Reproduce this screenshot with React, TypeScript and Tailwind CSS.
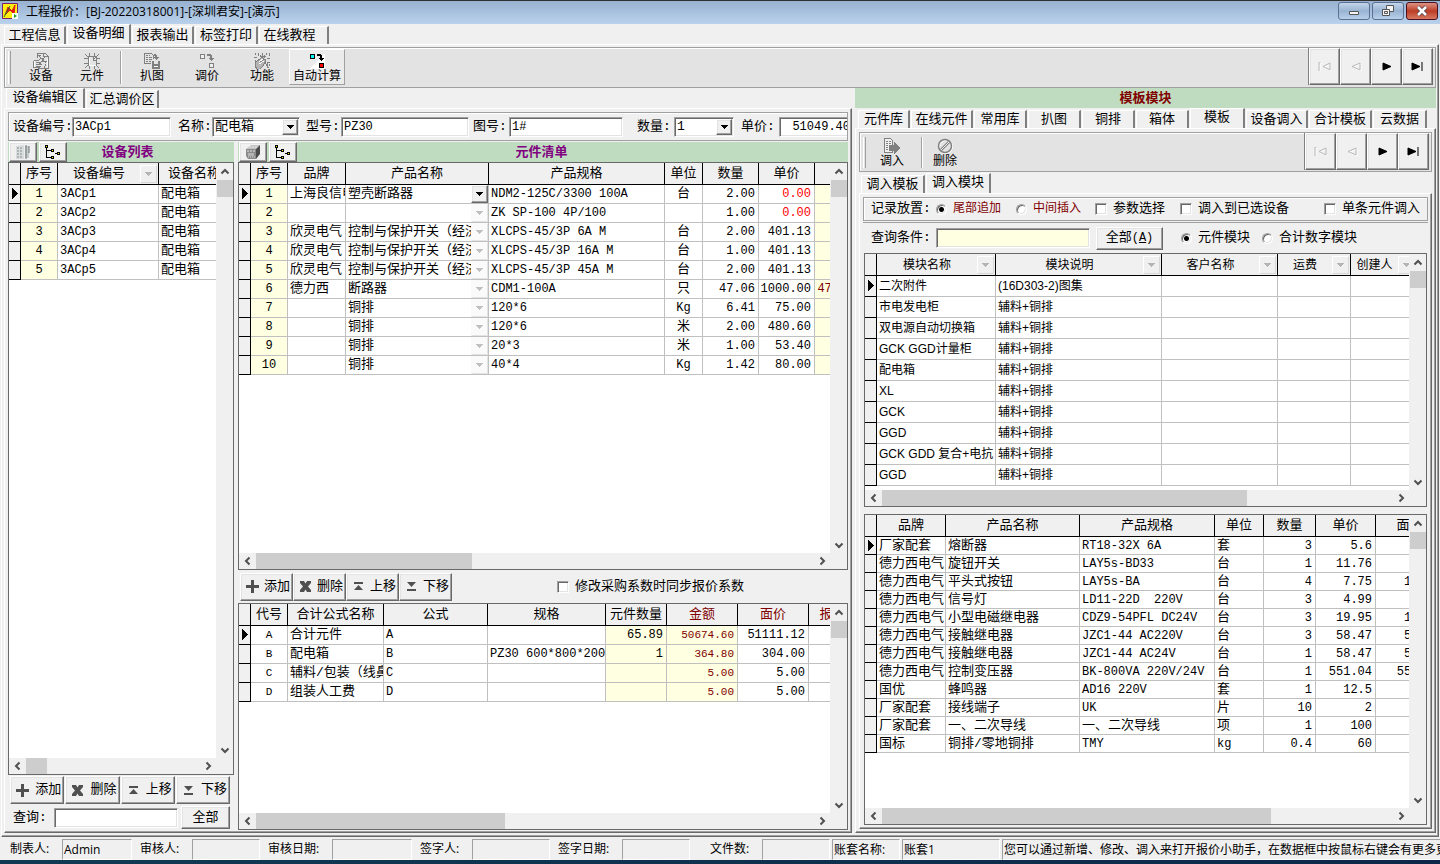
import type { ReactNode } from 'react';
import clsx from 'clsx';

// classic Windows bevels
const RAISED = 'border border-t-white border-l-white border-r-[#696969] border-b-[#696969] bg-[#f0f0f0] shadow-[inset_-1px_-1px_0_#a0a0a0,inset_1px_1px_0_#e3e3e3]';
const SUNKEN = 'border border-t-[#a0a0a0] border-l-[#a0a0a0] border-r-white border-b-white shadow-[inset_1px_1px_0_#696969,inset_-1px_-1px_0_#e3e3e3]';
const ETCHED = 'border border-[#a0a0a0] shadow-[inset_1px_1px_0_#fff]';
const FRAME = 'border border-t-white border-l-white border-r-[#696969] border-b-[#696969] shadow-[inset_-1px_-1px_0_#a0a0a0]';

type Column = {
  label: string;
  width: string;
  align?: 'left' | 'center' | 'right';
  color?: string;
  headColor?: string;
  bg?: string;
  filter?: boolean;
  picker?: boolean;
  small?: boolean;
};

const ALIGN = { left: 'text-left', center: 'text-center', right: 'text-right' };

const DEVICE_COLUMNS: Column[] = [
  { label: '序号', width: 'w-[37px]', align: 'center', bg: 'bg-[#ffffe1]' },
  { label: '设备编号', width: 'w-[101px]', filter: true },
  { label: '设备名称', width: 'w-[71px]' },
];

const DEVICE_ROWS = [
  ['1', '3ACp1', '配电箱'],
  ['2', '3ACp2', '配电箱'],
  ['3', '3ACp3', '配电箱'],
  ['4', '3ACp4', '配电箱'],
  ['5', '3ACp5', '配电箱'],
];

const PART_COLUMNS: Column[] = [
  { label: '序号', width: 'w-[37px]', align: 'center', bg: 'bg-[#ffffe1]' },
  { label: '品牌', width: 'w-[58px]' },
  { label: '产品名称', width: 'w-[143px]', picker: true },
  { label: '产品规格', width: 'w-[176px]' },
  { label: '单位', width: 'w-[38px]', align: 'center' },
  { label: '数量', width: 'w-[56px]', align: 'right' },
  { label: '单价', width: 'w-[56px]', align: 'right' },
  { label: '金额', width: 'w-[64px]', align: 'right', bg: 'bg-[#ffffe1]', color: 'text-[#800000]' },
];

const PART_ROWS = [
  ['1', '上海良信电器', '塑壳断路器', 'NDM2-125C/3300 100A', '台', '2.00', '0.00', ''],
  ['2', '', '', 'ZK SP-100 4P/100', '', '1.00', '0.00', ''],
  ['3', '欣灵电气', '控制与保护开关（经济型）', 'XLCPS-45/3P 6A M', '台', '2.00', '401.13', ''],
  ['4', '欣灵电气', '控制与保护开关（经济型）', 'XLCPS-45/3P 16A M', '台', '1.00', '401.13', ''],
  ['5', '欣灵电气', '控制与保护开关（经济型）', 'XLCPS-45/3P 45A M', '台', '2.00', '401.13', ''],
  ['6', '德力西', '断路器', 'CDM1-100A', '只', '47.06', '1000.00', '47060.00'],
  ['7', '', '铜排', '120*6', 'Kg', '6.41', '75.00', ''],
  ['8', '', '铜排', '120*6', '米', '2.00', '480.60', ''],
  ['9', '', '铜排', '20*3', '米', '1.00', '53.40', ''],
  ['10', '', '铜排', '40*4', 'Kg', '1.42', '80.00', ''],
];

const FORMULA_COLUMNS: Column[] = [
  { label: '代号', width: 'w-[37px]', align: 'center', small: true },
  { label: '合计公式名称', width: 'w-[96px]' },
  { label: '公式', width: 'w-[104px]' },
  { label: '规格', width: 'w-[118px]' },
  { label: '元件数量', width: 'w-[61px]', align: 'right', bg: 'bg-[#ffffe1]' },
  { label: '金额', width: 'w-[71px]', align: 'right', bg: 'bg-[#ffffe1]', color: 'text-[#800000]', headColor: 'text-[#800000]', small: true },
  { label: '面价', width: 'w-[71px]', align: 'right', headColor: 'text-[#800000]' },
  { label: '报价系数', width: 'w-[74px]', align: 'right', headColor: 'text-[#800000]' },
];

const FORMULA_ROWS = [
  ['A', '合计元件', 'A', '', '65.89', '50674.60', '51111.12', ''],
  ['B', '配电箱', 'B', 'PZ30 600*800*200', '1', '364.80', '304.00', ''],
  ['C', '辅料/包装（线鼻子）', 'C', '', '', '5.00', '5.00', ''],
  ['D', '组装人工费', 'D', '', '', '5.00', '5.00', ''],
];

const MODULE_COLUMNS: Column[] = [
  { label: '模块名称', width: 'w-[119px]', filter: true },
  { label: '模块说明', width: 'w-[166px]', filter: true },
  { label: '客户名称', width: 'w-[116px]', filter: true },
  { label: '运费', width: 'w-[73px]', filter: true },
  { label: '创建人', width: 'w-[66px]', filter: true },
];

const MODULE_ROWS = [
  ['二次附件', '(16D303-2)图集', '', '', ''],
  ['市电发电柜', '辅料+铜排', '', '', ''],
  ['双电源自动切换箱', '辅料+铜排', '', '', ''],
  ['GCK GGD计量柜', '辅料+铜排', '', '', ''],
  ['配电箱', '辅料+铜排', '', '', ''],
  ['XL', '辅料+铜排', '', '', ''],
  ['GCK', '辅料+铜排', '', '', ''],
  ['GGD', '辅料+铜排', '', '', ''],
  ['GCK GDD 复合+电抗', '辅料+铜排', '', '', ''],
  ['GGD', '辅料+铜排', '', '', ''],
];

const ITEM_COLUMNS: Column[] = [
  { label: '品牌', width: 'w-[69px]' },
  { label: '产品名称', width: 'w-[134px]' },
  { label: '产品规格', width: 'w-[135px]' },
  { label: '单位', width: 'w-[49px]' },
  { label: '数量', width: 'w-[52px]', align: 'right' },
  { label: '单价', width: 'w-[60px]', align: 'right' },
  { label: '面价', width: 'w-[68px]', align: 'right' },
];

const ITEM_ROWS = [
  ['厂家配套', '熔断器', 'RT18-32X 6A', '套', '3', '5.6', ''],
  ['德力西电气', '旋钮开关', 'LAY5s-BD33', '台', '1', '11.76', ''],
  ['德力西电气', '平头式按钮', 'LAY5s-BA', '台', '4', '7.75', '14.09'],
  ['德力西电气', '信号灯', 'LD11-22D  220V', '台', '3', '4.99', ''],
  ['德力西电气', '小型电磁继电器', 'CDZ9-54PFL DC24V', '台', '3', '19.95', '19.95'],
  ['德力西电气', '接触继电器', 'JZC1-44 AC220V', '台', '3', '58.47', '58.47'],
  ['德力西电气', '接触继电器', 'JZC1-44 AC24V', '台', '1', '58.47', '58.47'],
  ['德力西电气', '控制变压器', 'BK-800VA 220V/24V', '台', '1', '551.04', '551.04'],
  ['国优', '蜂鸣器', 'AD16 220V', '套', '1', '12.5', ''],
  ['厂家配套', '接线端子', 'UK', '片', '10', '2', ''],
  ['厂家配套', '一、二次导线', '一、二次导线', '项', '1', '100', ''],
  ['国标', '铜排/零地铜排', 'TMY', 'kg', '0.4', '60', ''],
];

function Chevron({ dir }: { dir: 'up' | 'down' | 'left' | 'right' }) {
  const paths = {
    up: 'M1.5 6.5 5 3l3.5 3.5',
    down: 'M1.5 3.5 5 7l3.5-3.5',
    left: 'M6.5 1.5 3 5l3.5 3.5',
    right: 'M3.5 1.5 7 5 3.5 8.5',
  };
  return (
    <svg viewBox="0 0 10 10" className="w-2.5 h-2.5">
      <path d={paths[dir]} fill="none" stroke="#505050" strokeWidth="2" />
    </svg>
  );
}

function Triangle({ className }: { className?: string }) {
  return (
    <svg viewBox="0 0 7 4" className={clsx('w-[7px] h-1', className)} shapeRendering="crispEdges">
      <path d="M0 0h7v1H6v1H5v1H4v1H3V3H2V2H1V1H0z" fill="currentColor" />
    </svg>
  );
}

type GridProps = {
  columns: Column[];
  rows: string[][];
  label: string;
  thumb: string;
  rowClass?: string;
  sans?: boolean;
  className?: string;
};

function DataGrid({ columns, rows, label, thumb, rowClass = 'h-[19px] leading-[18px]', sans, className }: GridProps) {
  const cellSize = (text: string, small?: boolean) => {
    if (sans) return 'text-xs';
    // half-width text is set a size smaller so it keeps to the 7px pitch
    if (/[^\x00-\x7f]/.test(text)) return 'text-[13px]';
    return small ? 'text-[11px]' : 'text-xs';
  };

  return (
    <div className={clsx('flex min-h-0 flex-col border border-[#696969] bg-white', className)}>
      <div className="flex min-h-0 flex-1">
        <div className="min-w-0 flex-1 overflow-hidden">
          <table
            aria-label={label}
            className={clsx('w-0 table-fixed border-separate border-spacing-0', sans && "[font-family:'Liberation_Sans','Noto_Sans_CJK_SC',sans-serif]")}
          >
            <colgroup>
              <col className="w-3" />
              {columns.map((c, i) => <col key={i} className={c.width} />)}
            </colgroup>
            <thead>
              <tr className="h-[22px] leading-5">
                <th className="border-r border-b border-black bg-[#f0f0f0] p-0" />
                {columns.map((c, i) => (
                  <th key={i} className={clsx('overflow-hidden whitespace-nowrap border-r border-b border-black bg-[#f0f0f0] p-0 font-normal', sans ? 'text-xs' : 'text-[13px]', c.headColor)}>
                    <div className="flex items-center justify-center overflow-hidden">
                      <span className="flex-1">{c.label}</span>
                      {c.filter && (
                        <span className="mr-px flex h-[18px] w-[17px] items-center justify-center border border-t-white border-l-white border-r-[#d8d8d8] border-b-[#d8d8d8] text-[#b4b4b4]">
                          <Triangle />
                        </span>
                      )}
                    </div>
                  </th>
                ))}
              </tr>
            </thead>
            <tbody>
              {rows.map((row, r) => (
                <tr key={r} className={rowClass}>
                  <td className="border-r border-b border-black bg-[#f0f0f0] p-0">
                    {r === 0 && (
                      <svg viewBox="0 0 11 12" className="h-3 w-[11px]" shapeRendering="crispEdges">
                        <path d="M3 0h1v1h1v1h1v1h1v1h1v1h1v1H8v1H7v1H6v1H5v1H4v1H3z" />
                      </svg>
                    )}
                  </td>
                  {row.map((text, i) => {
                    const c = columns[i];
                    return (
                      <td
                        key={i}
                        className={clsx(
                          'overflow-hidden whitespace-pre border-r border-b border-[#c0c0c0] p-0',
                          ALIGN[c.align ?? 'left'],
                          c.align === 'center' ? '' : c.align === 'right' ? 'pr-[3px]' : 'pl-0.5',
                          c.bg,
                          text === '0.00' ? 'text-[#ff0000]' : c.color,
                          cellSize(text, c.small),
                        )}
                      >
                        {c.picker ? (
                          <div className="flex items-center">
                            <span className="min-w-0 flex-1 overflow-hidden">{text}</span>
                            <button
                              aria-label="选择产品"
                              className={clsx('flex h-[18px] w-[17px] shrink-0 items-center justify-center', r === 0 ? RAISED : 'border border-transparent border-r-[#e3e3e3] border-b-[#e3e3e3] bg-[#fafafa] text-[#c0c0c0]')}
                            >
                              <Triangle />
                            </button>
                          </div>
                        ) : text}
                      </td>
                    );
                  })}
                </tr>
              ))}
            </tbody>
          </table>
        </div>
        <div className="flex w-[17px] shrink-0 flex-col bg-[#f0f0f0] pl-px">
          <div className="flex h-[17px] items-center justify-center"><Chevron dir="up" /></div>
          <div className="h-[17px] bg-[#cdcdcd]" />
          <div className="flex-1" />
          <div className="flex h-[17px] items-center justify-center"><Chevron dir="down" /></div>
        </div>
      </div>
      <div className="flex h-4 shrink-0 bg-[#f0f0f0]">
        <div className="flex w-[17px] items-center justify-center"><Chevron dir="left" /></div>
        <div className={clsx('bg-[#cdcdcd]', thumb)} />
        <div className="flex-1" />
        <div className="mr-[17px] flex w-[17px] items-center justify-center"><Chevron dir="right" /></div>
      </div>
    </div>
  );
}

type TabItem = [label: string, width: string];

function TabStrip({ tabs, active, className }: { tabs: TabItem[]; active: string; className?: string }) {
  return (
    <div role="tablist" className={clsx('flex h-5 shrink-0 items-end gap-px text-[13px]', className)}>
      {tabs.map(([label, width]) => (
        <button
          key={label}
          role="tab"
          aria-selected={label === active}
          className={clsx(
            'shrink-0 whitespace-nowrap border-t border-l border-t-white border-l-white border-r-2 border-r-[#808080]',
            label === active ? 'h-5 pb-0.5 leading-[17px]' : 'h-[18px] leading-4',
            width,
          )}
        >
          {label}
        </button>
      ))}
    </div>
  );
}

function ToolButton({ icon, label, className }: { icon: ReactNode; label: string; className?: string }) {
  return (
    <button className={clsx('flex h-9 shrink-0 flex-col items-center text-xs leading-4', className)}>
      <span className="mt-[3px] h-4 w-4">{icon}</span>
      {label}
    </button>
  );
}

function NavButtons() {
  const items = [
    { label: '首记录', off: true, d: 'M1 0v9M1 0h2M12 1 5 4.5 12 8z' },
    { label: '上一条', off: true, d: 'M11 1 3 4.5 11 8z' },
    { label: '下一条', off: false, d: 'M3 1 11 4.5 3 8z' },
    { label: '末记录', off: false, d: 'M1 1 9 4.5 1 8zM11 0v9' },
  ];
  return (
    <div className="mr-0.5 ml-auto flex shrink-0 border-l border-[#808080]">
      {items.map((item) => (
        <button key={item.label} aria-label={item.label} className={clsx('flex h-[37px] w-[31px] items-center justify-center', RAISED)}>
          <svg viewBox="0 0 13 9" className="h-[9px] w-[13px]">
            {item.off ? (
              <>
                <path d={item.d} fill="none" stroke="#fff" transform="translate(1 1)" />
                <path d={item.d} fill="none" stroke="#b8b8b8" />
              </>
            ) : (
              <path d={item.d} fill="#000" stroke="#000" />
            )}
          </svg>
        </button>
      ))}
    </div>
  );
}

function DeviceIcon() {
  return (
    <svg viewBox="0 0 16 16" className="h-4 w-4" fill="none" stroke="#808080" shapeRendering="crispEdges">
      <path d="M4.5 5V.5h8l3 3v12h-11M4 2.5h4M10 .5v3h5" />
      <path d="M.5 7.5h5l2-2h2v3h4M.5 7.5v7h5l2 1h4l1-4M3 9.5h4M3 11.5h6M3 13.5h5M6 3l7 7M12 4l-6 8" />
      <path d="M1.5 8v6M14 5.5v8" stroke="#fff" />
    </svg>
  );
}

function ChipIcon() {
  return (
    <svg viewBox="0 0 16 16" className="h-4 w-4" fill="none" stroke="#808080" shapeRendering="crispEdges">
      <path d="M4.5 3.5h8v9h-8zM5.5 0v3M10.5 0v3M5.5 13v3M10.5 13v3M0 5.5h4M0 10.5h4M13 5.5h3M13 10.5h3M1 1l3 3M15 1l-5 5M1 15l3-3M15 15l-3-3M9.5 3v4h3" />
      <path d="M5.5 5v7h6" stroke="#fff" />
    </svg>
  );
}

function CopyIcon() {
  return (
    <svg viewBox="0 0 16 16" className="h-4 w-4" fill="none" stroke="#808080" shapeRendering="crispEdges">
      <path d="M7 10.500H.5V.5h7l2 2v3M2 2.500h2M5 2.500h1M2 4.500h2M5 4.500h3M2 6.500h2M5 6.500h3M2 8.500h2M5 8.500h2" />
      <path d="M10 1h2v1h1v2h2L12.500 7 10 4h1V3h-1z" fill="#808080" stroke="none" />
      <path d="M8 8h8v8H8zM10 8v3h4V8z" fill="#808080" fillRule="evenodd" stroke="none" />
      <path d="M10 13.500h4" stroke="#fff" />
    </svg>
  );
}

function PriceIcon({ on }: { on?: boolean }) {
  return (
    <svg viewBox="0 0 16 16" className="h-4 w-4" shapeRendering="crispEdges">
      {on && <path d="M16 0v16H0z" fill="#fff" />}
      <path d="M1.500 1.500h4v4h-4z" fill={on ? '#00ffff' : '#f0f0f0'} stroke={on ? '#000' : '#808080'} />
      <path d="M8 1h4v1h1v3h2v1h-1v1h-1v1h-1V7h-1V6h-1V5h1V3H8z" fill={on ? '#000' : '#808080'} />
      <path d="M10.500 10.500h4v4h-4z" fill={on ? '#ff0000' : '#f0f0f0'} stroke={on ? '#000' : '#808080'} />
    </svg>
  );
}

function FunctionIcon() {
  return (
    <svg viewBox="0 0 16 16" className="h-4 w-4" fill="none" stroke="#808080" shapeRendering="crispEdges">
      <path d="M1 0v2M4 0v3M8 0v4M12 0v2M15 0v3M0 4.500h3M13 5.500h3M10 2l2 2M6 2l3 4M14 9h2M11 10l4 5M13 9v6M15 11v2M1 7l2 3" />
      <path d="m3 8 7-5 1 1-5 5 5-3 1 2-3 5-3 3H3l-2-3V9l1-1z" fill="#b4b4b4" />
      <path d="m5 9 4-3M5 11l5-3" stroke="#fff" />
    </svg>
  );
}

function ImportIcon() {
  return (
    <svg viewBox="0 0 16 16" className="h-4 w-4" shapeRendering="crispEdges">
      <path d="M.5 .5h6l2 2v12h-8z" fill="#f0f0f0" stroke="#808080" />
      <path d="M2 3.500h2M5 3.500h2M2 5.500h2M5 5.500h2M2 7.500h2M2 9.500h2M2 11.500h2" stroke="#808080" />
      <path d="M5 7h5V4l6 6-6 6v-3H5z" fill="#808080" />
    </svg>
  );
}

function BanIcon() {
  return (
    <svg viewBox="0 0 16 16" className="h-4 w-4" fill="none">
      <circle cx="8.500" cy="8.500" r="6.500" stroke="#fff" strokeWidth="2" />
      <circle cx="8" cy="8" r="6.500" stroke="#808080" strokeWidth="1.500" />
      <path d="m4 12 8-8" stroke="#808080" strokeWidth="2.500" />
      <path d="m4 12 8-8" stroke="#f0f0f0" />
    </svg>
  );
}

function TreeIcon() {
  return (
    <svg viewBox="0 0 16 16" className="h-4 w-4" fill="#ffff00" stroke="#000" shapeRendering="crispEdges">
      <path d="M1.500 4v9.500H6M2 6.500h4M10 9.500h3" fill="none" />
      <path d="M.5 1.500h2v2h-2zM6.500 5.500h2v2h-2zM6.500 12.500h2v2h-2zM12.500 8.500h2v2h-2z" />
    </svg>
  );
}

function CabinetIcon() {
  return (
    <svg viewBox="0 0 16 16" className="h-4 w-4">
      <path d="M1 2 9 1v14H1z" fill="#d9dcdc" />
      <path d="M10 2h4v12h-4z" fill="#c4caca" />
      <path d="M11 1v14M14 2v7" stroke="#6f7777" />
      <path d="M2 4h2M5 4h2M2 7h2M5 7h2M2 10h2M5 10h2M2 13h2M5 13h2" stroke="#858c8c" />
    </svg>
  );
}

function BreakerIcon() {
  return (
    <svg viewBox="0 0 16 16" className="h-4 w-4">
      <path d="m1 5 5-4h9l-4 4z" fill="#c4c4c4" />
      <path d="M1 5h10v10H3L1 12z" fill="#8a8a8a" />
      <path d="m11 5 4-4v9l-4 5z" fill="#4b4b4b" />
      <path d="M2 7h8M4 3h8" stroke="#e8e8e8" strokeDasharray="2 1" />
      <path d="M3 9h6v3H3z" fill="#b4b4b4" />
      <path d="M3 13h7" stroke="#ddd" strokeDasharray="1 1" />
    </svg>
  );
}

const EDIT_ACTIONS = [
  { label: '添加', d: 'M6 1h3v5h5v3H9v5H6V9H1V6h5z' },
  { label: '删除', d: 'M2 2h4l1.500 2.500L9 2h4v2l-3 3.500L13 11v2H9l-1.500-2.500L6 13H2v-2l3-3.500L2 4z' },
  { label: '上移', d: 'M3 3h9v2H3zM7.500 6l4.500 5H3z' },
  { label: '下移', d: 'M3 3h9L7.500 8zM3 10h9v2H3z' },
];

function EditButtons({ className, button }: { className: string; button: string }) {
  return (
    <div className={className}>
      {EDIT_ACTIONS.map((a) => (
        <button key={a.label} className={clsx('flex h-7 items-center justify-between pl-1 pr-0.5 text-[13px]', RAISED, button)}>
          <svg viewBox="0 0 15 15" className="h-[15px] w-[15px] shrink-0" fill="#505050"><path d={a.d} /></svg>
          {a.label}
        </button>
      ))}
    </div>
  );
}

function PanelTitle({ title, icon, pad }: { title: string; icon: ReactNode; pad: string }) {
  return (
    <div className="flex h-5 shrink-0 items-stretch gap-0.5 bg-[#c0dcc0] pl-px">
      <button aria-label={title} className={clsx('flex w-7 items-center justify-center', RAISED)}>{icon}</button>
      <button aria-label="树形显示" className={clsx('flex w-7 items-center justify-center', RAISED)}><TreeIcon /></button>
      <h2 className={clsx('flex-1 text-center text-[13px] font-bold leading-[21px] text-[#800080]', pad)}>{title}</h2>
    </div>
  );
}

type FieldProps = { id: string; label: string; value: string; labelWidth: string; width: string; gap?: string; right?: boolean };

function TextField({ id, label, value, labelWidth, width, gap, right }: FieldProps) {
  return (
    <div className={clsx('flex shrink-0 items-center', gap)}>
      <label htmlFor={id} className={clsx('whitespace-nowrap', labelWidth)}>{label}</label>
      <input id={id} defaultValue={value} className={clsx('h-5 bg-white px-0.5 text-xs', SUNKEN, width, right && 'pr-2 text-right')} />
    </div>
  );
}

function SelectField({ id, label, value, labelWidth, width, gap }: FieldProps) {
  return (
    <div className={clsx('flex shrink-0 items-center', gap)}>
      <label htmlFor={id} className={clsx('whitespace-nowrap', labelWidth)}>{label}</label>
      <div className={clsx('relative', width)}>
        <select id={id} defaultValue={value} className={clsx('block h-5 w-full appearance-none bg-white px-0.5 leading-4', SUNKEN)}>
          <option>{value}</option>
        </select>
        <span className={clsx('pointer-events-none absolute top-0.5 right-0.5 flex h-4 w-4 items-center justify-center', RAISED)}>
          <Triangle />
        </span>
      </div>
    </div>
  );
}

function Choice({ type, name, label, checked, className, gap = 'gap-1.5' }: { type: 'radio' | 'checkbox'; name?: string; label: string; checked?: boolean; className?: string; gap?: string }) {
  return (
    <label className={clsx('flex shrink-0 items-center whitespace-nowrap', gap, className)}>
      <input
        type={type}
        name={name}
        defaultChecked={checked}
        className={clsx(
          'appearance-none bg-white',
          type === 'radio' ? 'h-[11px] w-[11px] rounded-full checked:bg-[radial-gradient(circle,#000_2px,#fff_3px)]' : 'h-3 w-3 checked:bg-black',
          SUNKEN,
        )}
      />
      {label}
    </label>
  );
}

function TitleBar() {
  const button = 'flex h-[18px] items-center justify-center rounded-[3px] border';
  return (
    <header className="flex h-6 shrink-0 items-start border-t border-[#303030] bg-linear-to-b from-[#97b1d0] to-[#bad2ec]">
      <svg viewBox="0 0 16 16" className="mt-0.5 ml-0.5 h-4 w-4">
        <path d="M.5.5h15v15H.5z" fill="#ffee10" stroke="#7a2070" />
        <path d="m3 12 3-8 4 4 3-6-1 9-4-4z" fill="#e01818" stroke="#e01818" />
        <path d="M2 14 8 3" stroke="#208020" />
        <path d="M10 10h6v6h-6z" fill="#fff" />
        <path d="m12 11 3 2-3 2z" fill="#20a020" />
      </svg>
      <h1 className="ml-2 flex-1 text-xs leading-[22px] [font-family:'Open_Sans','Noto_Sans_CJK_SC',sans-serif]">工程报价：[BJ-20220318001]-[深圳君安]-[演示]</h1>
      <div className="mt-px mr-0.5 flex gap-0.5">
        <button aria-label="最小化" className={clsx(button, 'w-8 border-[#5b7090] bg-linear-to-b from-[#c3d5ea] via-[#98b3d2] to-[#b8d0ea]')}>
          <svg viewBox="0 0 12 12" className="h-3 w-3"><path d="M1.500 6.500h9v3h-9z" fill="#f4f4f4" stroke="#555" /></svg>
        </button>
        <button aria-label="还原" className={clsx(button, 'w-8 border-[#5b7090] bg-linear-to-b from-[#c3d5ea] via-[#98b3d2] to-[#b8d0ea]')}>
          <svg viewBox="0 0 12 12" className="h-3 w-3" fill="#f4f4f4" stroke="#555">
            <path d="M4.500.5h7v6h-7z" />
            <path d="M.5 4.500h7v6h-7zM2.500 6.500h3v2h-3z" />
          </svg>
        </button>
        <button aria-label="关闭" className={clsx(button, 'w-8 border-[#4a1020] bg-linear-to-b from-[#dc9284] via-[#bc3c24] to-[#d87860]')}>
          <svg viewBox="0 0 12 12" className="h-3 w-3"><path d="m2 2 8 8M10 2l-8 8" stroke="#50404a" strokeWidth="4" /><path d="m2 2 8 8M10 2l-8 8" stroke="#fff" strokeWidth="2.500" /></svg>
        </button>
      </div>
    </header>
  );
}

function DeviceEditor() {
  return (
    <section className="flex min-w-0 flex-1 flex-col">
      <TabStrip className="pl-0.5" active="设备编辑区" tabs={[['设备编辑区', 'w-[79px]'], ['汇总调价区', 'w-[73px]']]} />
      <div className={clsx('flex min-h-0 flex-1 flex-col p-[3px] pb-0.5', FRAME)}>
        <form className={clsx('flex h-[29px] shrink-0 items-center overflow-hidden pl-1 text-[13px]', ETCHED)}>
          <TextField id="code" label="设备编号:" value="3ACp1" labelWidth="w-[59px]" width="w-[99px]" />
          <SelectField id="name" label="名称:" value="配电箱" labelWidth="w-[34px]" width="w-[88px]" gap="ml-[7px]" />
          <TextField id="model" label="型号:" value="PZ30" labelWidth="w-[35px]" width="w-32" gap="ml-1.5" />
          <TextField id="drawing" label="图号:" value="1#" labelWidth="w-9" width="w-[114px]" gap="ml-1" />
          <SelectField id="qty" label="数量:" value="1" labelWidth="w-[37px]" width="w-[60px]" gap="ml-3.5" />
          <TextField id="price" label="单价:" value="51049.40" labelWidth="w-[38px]" width="w-20" gap="ml-[7px]" right />
        </form>

        <div className="mt-px flex min-h-0 flex-1 gap-1">
          {/* device list */}
          <div className="flex w-[226px] shrink-0 flex-col pb-px">
            <PanelTitle title="设备列表" icon={<CabinetIcon />} pad="pr-12" />
            <DataGrid label="设备列表" columns={DEVICE_COLUMNS} rows={DEVICE_ROWS} thumb="w-[21px]" className="flex-1" />
            <EditButtons className="mt-px mr-1 ml-0.5 grid grid-cols-4 gap-px" button="w-full" />
            <div className="mt-0.5 mr-1 flex h-[23px] items-center pl-[5px] text-[13px]">
              <label htmlFor="search" className="w-[41px] whitespace-nowrap">查询:</label>
              <input id="search" className={clsx('h-5 min-w-0 flex-1 bg-white px-0.5', SUNKEN)} />
              <button className={clsx('ml-[3px] h-[23px] w-[49px]', RAISED)}>全部</button>
            </div>
          </div>

          {/* part list + formulas */}
          <div className="flex min-w-0 flex-1 flex-col">
            <PanelTitle title="元件清单" icon={<BreakerIcon />} pad="pr-16" />
            <DataGrid label="元件清单" columns={PART_COLUMNS} rows={PART_ROWS} thumb="w-[216px]" className="flex-1" />
            <div className="flex h-[33px] shrink-0 items-center pl-0.5 text-[13px]">
              <EditButtons className="flex" button="w-[53px]" />
              <Choice type="checkbox" label="修改采购系数时同步报价系数" className="ml-[105px]" />
            </div>
            <DataGrid label="合计公式" columns={FORMULA_COLUMNS} rows={FORMULA_ROWS} thumb="w-[249px]" className="h-[227px] shrink-0" />
          </div>
        </div>
      </div>
    </section>
  );
}

const TEMPLATE_TABS: TabItem[] = [
  ['元件库', 'w-[52px]'],
  ['在线元件', 'w-[62px]'],
  ['常用库', 'w-[53px]'],
  ['扒图', 'w-[53px]'],
  ['铜排', 'w-[53px]'],
  ['箱体', 'w-[53px]'],
  ['模板', 'w-[55px]'],
  ['设备调入', 'w-[62px]'],
  ['合计模板', 'w-[63px]'],
  ['云数据', 'w-[54px]'],
];

function TemplatePanel() {
  return (
    <section className="flex w-[581px] shrink-0 flex-col">
      <h2 className="h-5 shrink-0 bg-[#c0dcc0] text-center text-[13px] font-bold leading-[21px] text-[#800000]">模板模块</h2>
      <TabStrip className="pl-[3px]" active="模板" tabs={TEMPLATE_TABS} />
      <div className={clsx('flex min-h-0 flex-1 flex-col p-[3px]', FRAME)}>
        <div className={clsx('flex h-10 shrink-0 items-start bg-[#e3e3e3] pl-[3px]', ETCHED)}>
          <div className="mt-1 h-[31px] w-[3px] border-r border-l border-r-[#a0a0a0] border-l-white" />
          <ToolButton className="mt-0.5 ml-2 w-9" icon={<ImportIcon />} label="调入" />
          <div className="mt-1 ml-[11px] h-[31px] w-0.5 border-r border-l border-r-white border-l-[#a0a0a0]" />
          <ToolButton className="mt-0.5 ml-1 w-9" icon={<BanIcon />} label="删除" />
          <NavButtons />
        </div>
        <TabStrip className="mt-px pl-0.5" active="调入模块" tabs={[['调入模板', 'w-[64px]'], ['调入模块', 'w-[65px]']]} />

        <div className={clsx('flex min-h-0 flex-1 flex-col p-[3px]', FRAME)}>
          <div className={clsx('flex h-6 shrink-0 items-center pl-[7px] text-[13px]', ETCHED)}>
            <span className="w-[65px]">记录放置:</span>
            <Choice type="radio" name="place" label="尾部追加" checked className="text-xs text-[#800000]" />
            <Choice type="radio" name="place" label="中间插入" className="ml-[15px] text-xs text-[#800000]" />
            <Choice type="checkbox" label="参数选择" className="ml-3.5" />
            <Choice type="checkbox" label="调入到已选设备" className="ml-[15px]" />
            <Choice type="checkbox" label="单条元件调入" className="mr-[7px] ml-auto" />
          </div>
          <div className="mt-px flex min-h-0 flex-1 flex-col border-t border-[#a0a0a0]">
            <div className="flex h-[30px] shrink-0 items-center pl-2 text-[13px]">
              <label htmlFor="query" className="w-[65px] whitespace-nowrap">查询条件:</label>
              <input id="query" className={clsx('h-5 w-[154px] bg-[#ffffe1] px-0.5', SUNKEN)} />
              <button className={clsx('ml-1.5 h-[23px] w-[67px]', RAISED)}>
                全部<span className="text-xs">(<u>A</u>)</span>
              </button>
              <Choice type="radio" name="kind" label="元件模块" checked className="ml-[18px]" />
              <Choice type="radio" name="kind" label="合计数字模块" className="ml-3" />
            </div>
            <DataGrid label="模块" sans columns={MODULE_COLUMNS} rows={MODULE_ROWS} rowClass="h-[21px] leading-[21px]" thumb="w-[365px]" className="mr-px ml-px h-[254px] shrink-0" />
            <DataGrid label="模块元件" columns={ITEM_COLUMNS} rows={ITEM_ROWS} rowClass="h-[18px] leading-[17px]" thumb="w-[389px]" className="mt-[7px] mr-px ml-px flex-1" />
          </div>
        </div>
      </div>
    </section>
  );
}

const STATUS = [
  { label: '制表人:', value: 'Admin', labelWidth: 'w-[52px]', width: 'w-[70px]' },
  { label: '审核人:', value: '', labelWidth: 'w-[52px]', width: 'w-[68px]' },
  { label: '审核日期:', value: '', labelWidth: 'w-16', width: 'w-20' },
  { label: '签字人:', value: '', labelWidth: 'w-[52px]', width: 'w-[78px]' },
  { label: '签字日期:', value: '', labelWidth: 'w-16', width: 'w-[68px]' },
];

function StatusBar() {
  const cell = 'h-[21px] shrink-0 border border-t-[#a0a0a0] border-l-[#a0a0a0] border-r-white border-b-white pl-px leading-5';
  return (
    <footer className="mt-px flex h-[22px] shrink-0 items-center gap-2 overflow-hidden whitespace-nowrap pl-2.5 text-xs [font-family:'Open_Sans','Noto_Sans_CJK_SC',sans-serif]">
      {STATUS.map((s) => (
        <div key={s.label} className="flex shrink-0 items-center">
          <span className={s.labelWidth}>{s.label}</span>
          <span className={clsx(cell, s.width)}>{s.value}</span>
        </div>
      ))}
      <div className="ml-3 flex shrink-0 items-center">
        <span className="w-[52px]">文件数:</span>
        <span className={clsx(cell, 'w-[68px]')} />
        <span className={clsx(cell, 'ml-0.5 w-[68px]')}>账套名称:</span>
        <span className={clsx(cell, 'ml-0.5 w-[98px]')}>账套1</span>
        <span className={clsx(cell, 'ml-0.5')}>您可以通过新增、修改、调入来打开报价小助手，在数据框中按鼠标右键会有更多更能</span>
      </div>
    </footer>
  );
}

export default function App() {
  return (
    <div className="flex h-screen flex-col overflow-hidden bg-[#f0f0f0] text-black [font-family:'Liberation_Mono','Noto_Sans_CJK_SC',monospace]">
      <TitleBar />
      <TabStrip
        className="pl-1"
        active="设备明细"
        tabs={[['工程信息', 'w-[62px]'], ['设备明细', 'w-[64px]'], ['报表输出', 'w-[62px]'], ['标签打印', 'w-[63px]'], ['在线教程', 'w-[70px] pr-2']]}
      />
      <main className={clsx('mx-px flex min-h-0 flex-1 flex-col px-0.5 pt-0.5 pb-[3px]', FRAME)}>
        <div className={clsx('flex h-[41px] shrink-0 items-start bg-[#e3e3e3] pl-[3px]', ETCHED)}>
          <div className="mt-[3px] h-[33px] w-[3px] border-r border-l border-r-[#a0a0a0] border-l-white" />
          <ToolButton className="mt-0.5 ml-3 w-9" icon={<DeviceIcon />} label="设备" />
          <ToolButton className="mt-0.5 ml-[15px] w-9" icon={<ChipIcon />} label="元件" />
          <div className="mt-[3px] ml-2.5 h-[33px] w-0.5 border-r border-l border-r-white border-l-[#a0a0a0]" />
          <ToolButton className="mt-0.5 ml-3 w-9" icon={<CopyIcon />} label="扒图" />
          <ToolButton className="mt-0.5 ml-[19px] w-9" icon={<PriceIcon />} label="调价" />
          <ToolButton className="mt-0.5 ml-[19px] w-9" icon={<FunctionIcon />} label="功能" />
          <ToolButton className="mt-px ml-[9px] w-14 border border-t-white border-l-white border-r-[#a0a0a0] border-b-[#a0a0a0] bg-[#ebebeb]" icon={<PriceIcon on />} label="自动计算" />
          <NavButtons />
        </div>
        <div className="flex min-h-0 flex-1 gap-[3px]">
          <DeviceEditor />
          <TemplatePanel />
        </div>
      </main>
      <StatusBar />
      <div className="h-1 shrink-0 bg-linear-to-r from-[#103a54] to-[#0c2848]" />
    </div>
  );
}
